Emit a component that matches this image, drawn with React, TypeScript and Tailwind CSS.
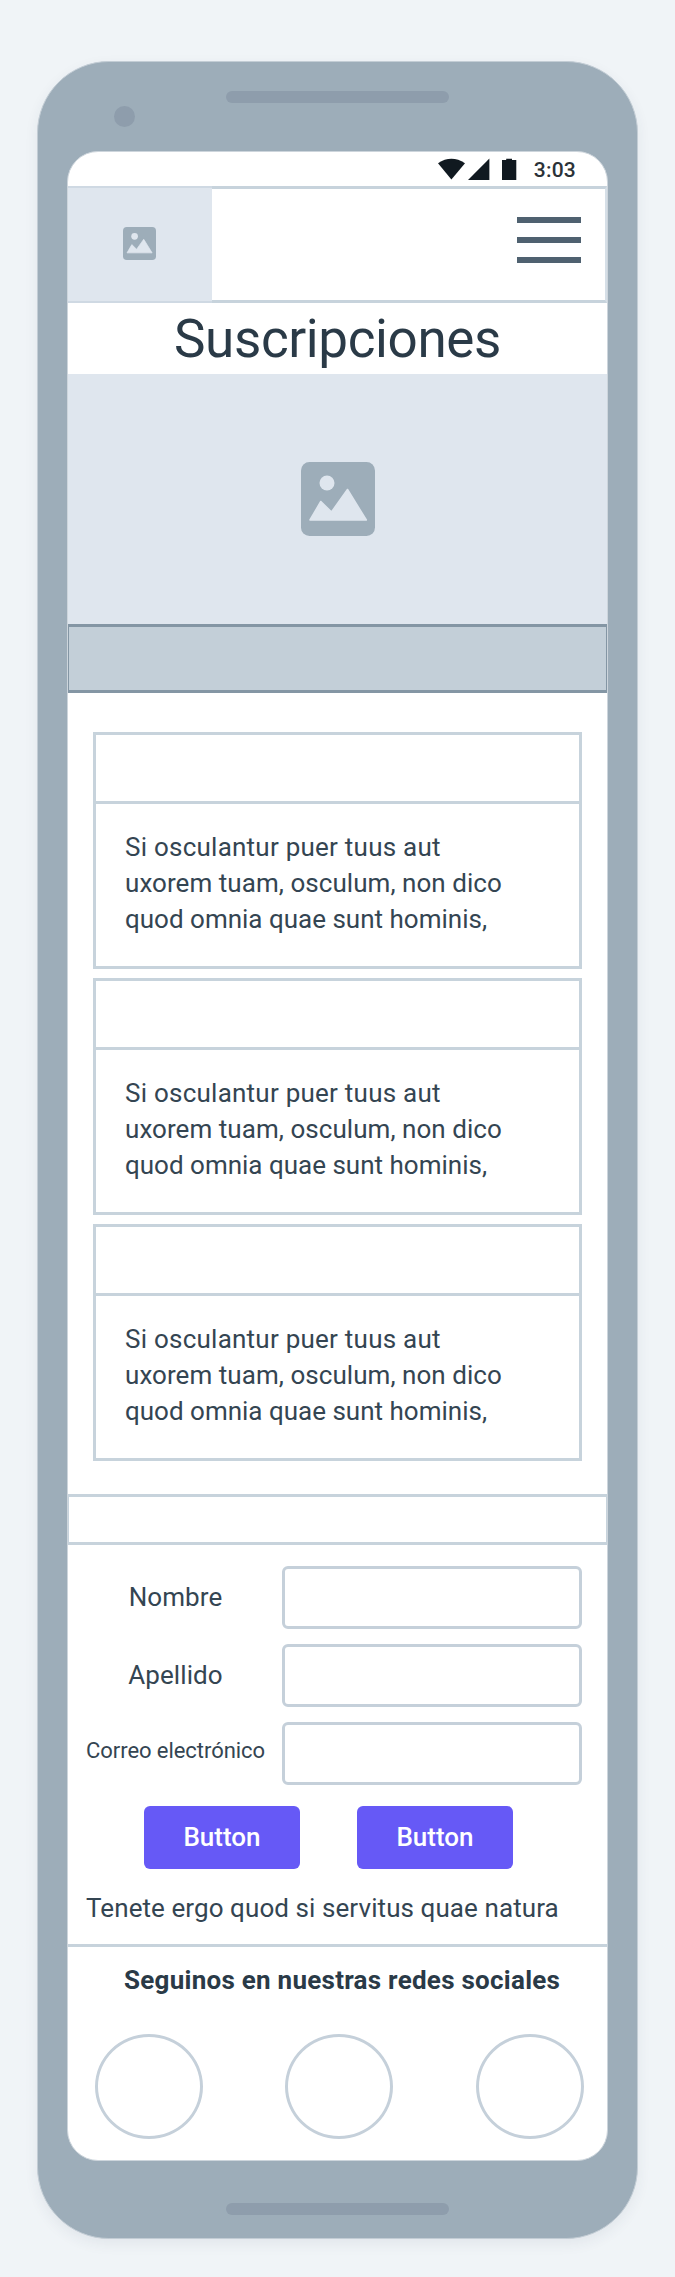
import React from "react";

function ImageIcon({ className }: { className: string }) {
  return (
    <svg viewBox="0 0 74 74" className={className} aria-hidden="true">
      <rect width="74" height="74" rx="8.5" fill="#9dadb9" />
      <circle cx="26" cy="21" r="7.5" fill="#dfe6ee" />
      <path
        d="M9 58 L19.8 39.5 L30.5 50 L46.5 27.5 L65.3 58 Z"
        fill="#dfe6ee"
        stroke="#dfe6ee"
        strokeWidth="1.6"
        strokeLinejoin="round"
      />
    </svg>
  );
}

function StatusBar() {
  return (
    <div className="flex h-[34px] shrink-0 items-start justify-end pr-[31px]">
      <svg viewBox="0 0 80 24" className="mt-[5px] h-[24px] w-[80px]" aria-hidden="true">
        <g fill="#101920">
          <path d="M0 6.2 Q13.4 -2.7 27 6.2 L13.4 22.4 Z" />
          <path d="M30 22.9 L51.4 1.6 V22.9 Z" />
          <path d="M64 3 H68.2 V1.7 H74 V3 H78.3 V22.9 H64 Z" />
        </g>
      </svg>
      <span className="ml-[16px] mt-px h-[33px] text-[21px] leading-[34px] font-medium tracking-[0.2px] text-[#2b3238]">
        3:03
      </span>
    </div>
  );
}

function Header() {
  return (
    <header className="flex h-[117px] shrink-0">
      <div className="flex w-[144px] items-center justify-center border-y-2 border-y-[#cfd9e3] bg-[#dfe6ee] pr-[2px] pb-[2px]">
        <ImageIcon className="h-[33px] w-[33px]" />
      </div>
      <div className="flex flex-1 justify-end border-y-[3px] border-r-2 border-[#c7d3dc] border-r-[#d6dfe7] pt-[28px] pr-[24px]">
        <button className="flex h-[46px] w-[64px] flex-col justify-between" aria-label="Menú">
          <span className="h-[6px] w-full bg-[#4f6170]" />
          <span className="h-[6px] w-full bg-[#4f6170]" />
          <span className="h-[6px] w-full bg-[#4f6170]" />
        </button>
      </div>
    </header>
  );
}

function Card() {
  return (
    <article className="h-[237px] border-[3px] border-[#c7d3dc]">
      <div className="h-[69px] border-b-[3px] border-[#c7d3dc]" />
      <p className="pt-[25px] pl-[29px] text-[26px] leading-[36px] whitespace-nowrap text-[#344552]">
        <span className="tracking-[0.24px]">Si osculantur puer tuus aut</span>
        <br />
        <span className="tracking-[0.05px]">uxorem tuam, osculum, non dico</span>
        <br />
        quod omnia quae sunt hominis,
      </p>
    </article>
  );
}

function Field({ label, small = false }: { label: string; small?: boolean }) {
  return (
    <label className="flex h-[63px] items-center">
      <span
        className={
          small
            ? "w-[214px] pb-[5px] pl-px text-center text-[22px] leading-[36px] tracking-[-0.06px]"
            : "w-[214px] pb-[2px] pl-px text-center text-[26px] leading-[36px] tracking-[0.1px]"
        }
      >
        {label}
      </span>
      <input type="text" className="h-[63px] w-[300px] rounded-[6px] border-[3px] border-[#c5d0da] bg-white outline-none" />
    </label>
  );
}

function Button() {
  return (
    <button className="h-[63px] w-[156px] rounded-[6px] bg-[#6659f6] text-[26px] font-medium text-white">Button</button>
  );
}

export default function App() {
  return (
    <div className="h-[2277px] w-[675px] bg-[#f0f4f7] px-[37px] pt-[61px] font-['Roboto','Noto_Sans',sans-serif]">
      <div className="flex h-[2178px] w-[601px] flex-col items-center rounded-[72px] border border-[#c3cdd5] bg-[#9dadb9] shadow-[0_5px_14px_rgba(40,60,80,0.07)]">
        <div className="flex h-[89px] w-full shrink-0 items-start pl-[76px]">
          <span className="mt-[44px] h-[21px] w-[21px] rounded-full bg-[#8e9dac]" />
          <span className="mt-[29px] ml-[91px] h-[12px] w-[223px] rounded-full bg-[#8e9dac]" />
        </div>

        <main className="flex h-[2010px] w-[541px] shrink-0 flex-col overflow-hidden rounded-[31px] border border-[#cdd5dc] bg-white text-[#344552]">
          <StatusBar />
          <Header />
          <h1 className="h-[71px] shrink-0 pt-px pl-[106px] text-[53px] leading-[71px] tracking-[-0.385px] whitespace-nowrap text-[#2a3a47]">
            Suscripciones
          </h1>
          <div className="flex h-[250px] shrink-0 items-center justify-center bg-[#dfe6ee]">
            <ImageIcon className="h-[74px] w-[74px]" />
          </div>
          <div className="h-[69px] shrink-0 border-x border-y-[3px] border-[#8496a4] bg-[#c3cfd8]" />

          <section className="mt-[39px] ml-[25px] flex w-[489px] flex-col gap-[9px]">
            <Card />
            <Card />
            <Card />
          </section>

          <div className="mt-[33px] h-[51px] shrink-0 border-x border-y-[3px] border-[#c7d3dc]" />

          <form className="mt-[21px] flex flex-col gap-[15px]">
            <Field label="Nombre" />
            <Field label="Apellido" />
            <Field label="Correo electrónico" small />
          </form>

          <div className="mt-[21px] flex gap-[57px] pl-[76px]">
            <Button />
            <Button />
          </div>

          <p className="mt-[21px] pb-[18px] pl-[18px] text-[26px] leading-[36px] tracking-[0.08px] whitespace-nowrap">
            Tenete ergo quod si servitus quae natura
          </p>

          <footer className="border-t-[3px] border-[#c7d3dc] pt-[15px]">
            <h2 className="pl-[56px] text-[26px] leading-[36px] font-bold tracking-[0.26px] whitespace-nowrap text-[#2a3a47]">
              Seguinos en nuestras redes sociales
            </h2>
            <div className="mt-[36px] flex gap-[82.5px] pl-[26.5px]">
              <span className="h-[105px] w-[108px] rounded-[50%] border-[3px] border-[#c5d0da]" />
              <span className="h-[105px] w-[108px] rounded-[50%] border-[3px] border-[#c5d0da]" />
              <span className="h-[105px] w-[108px] rounded-[50%] border-[3px] border-[#c5d0da]" />
            </div>
          </footer>
        </main>

        <span className="mt-[42px] h-[12px] w-[223px] rounded-full bg-[#8e9dac]" />
      </div>
    </div>
  );
}
